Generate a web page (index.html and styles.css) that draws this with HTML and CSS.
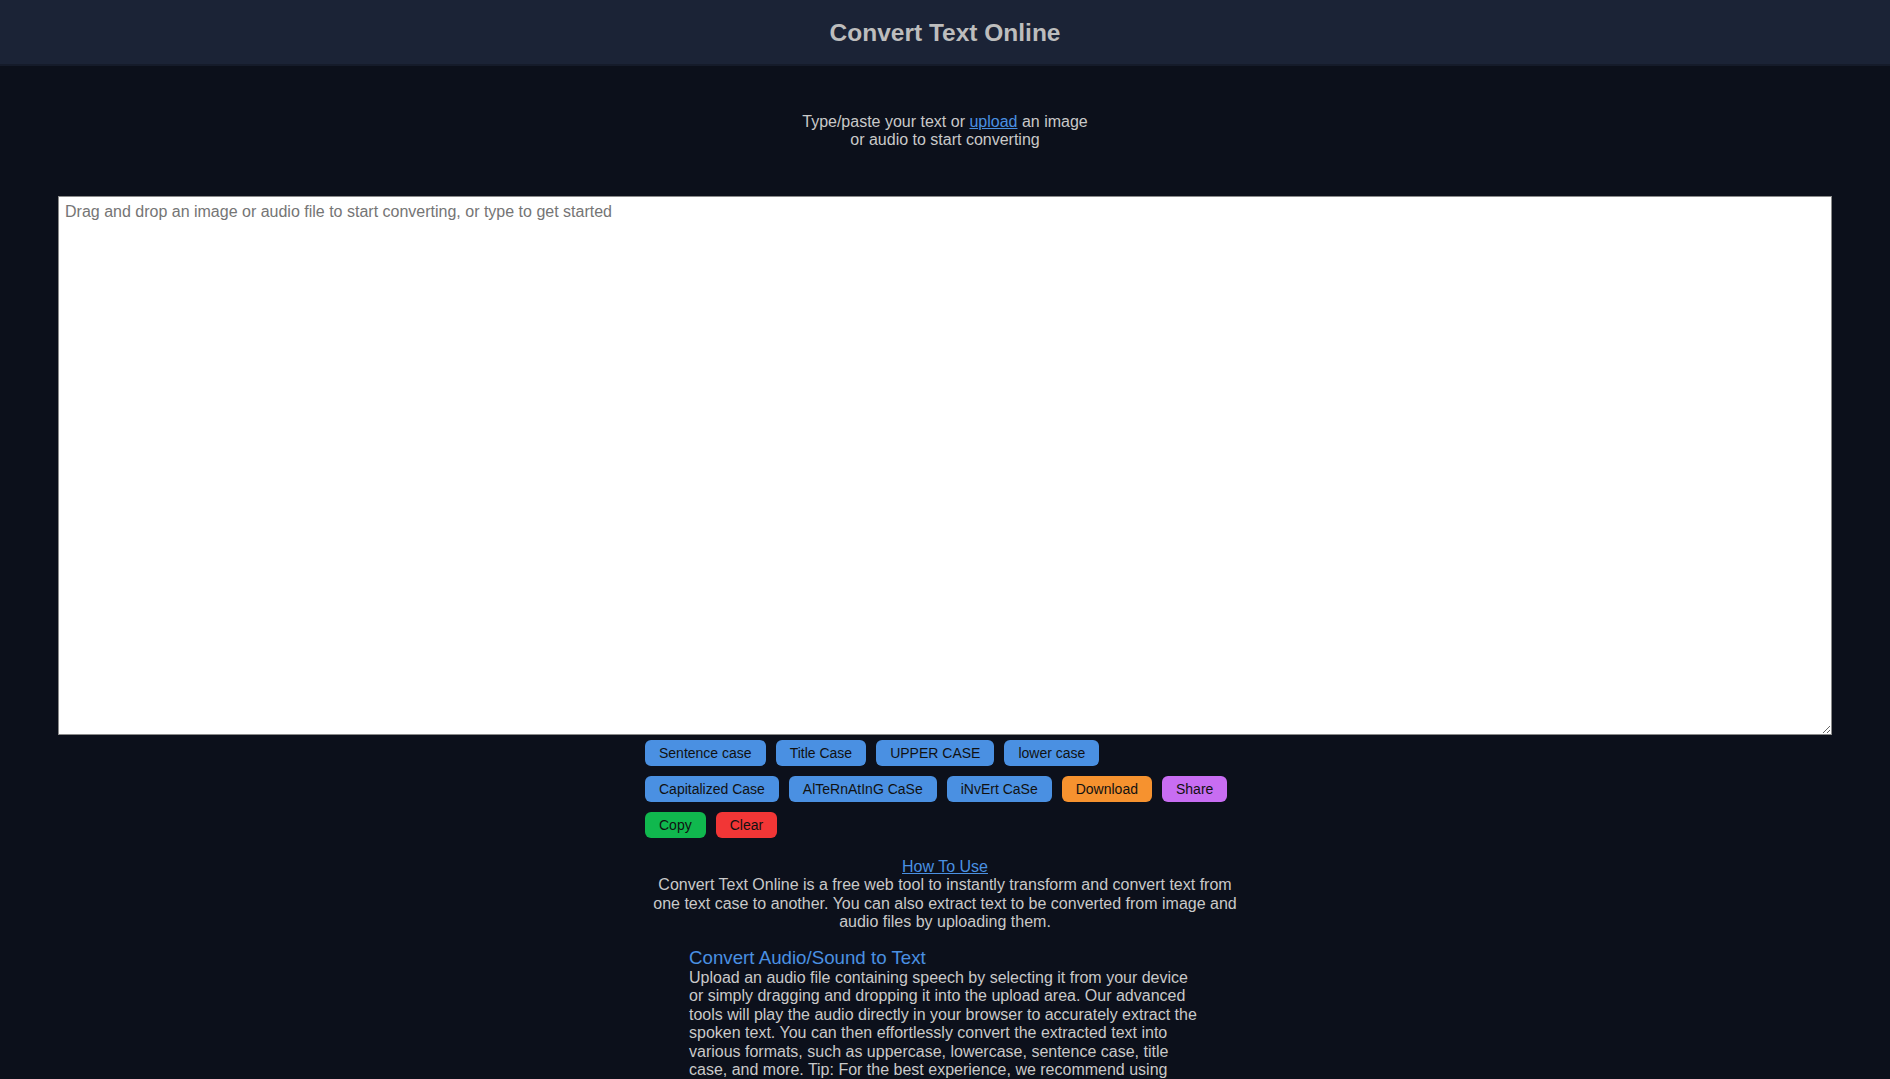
FILE: index.html
```html
<!DOCTYPE html>
<html lang="en">
<head>
<meta charset="utf-8">
<title>Convert Text Online</title>
<link rel="stylesheet" href="styles.css">
</head>
<body>
<header class="topbar">
  <h1 class="brand">Convert Text Online</h1>
</header>
<main class="main">
  <p class="intro">Type/paste your text or <a href="#" class="link">upload</a> an image or audio to start converting</p>
  <textarea class="editor" placeholder="Drag and drop an image or audio file to start converting, or type to get started"></textarea>
  <div class="actions">
    <div class="row">
      <button class="btn blue">Sentence case</button>
      <button class="btn blue">Title Case</button>
      <button class="btn blue">UPPER CASE</button>
      <button class="btn blue">lower case</button>
    </div>
    <div class="row">
      <button class="btn blue">Capitalized Case</button>
      <button class="btn blue">AlTeRnAtInG CaSe</button>
      <button class="btn blue">iNvErt CaSe</button>
      <button class="btn orange">Download</button>
      <button class="btn purple">Share</button>
    </div>
    <div class="row">
      <button class="btn green">Copy</button>
      <button class="btn red">Clear</button>
    </div>
  </div>
  <section class="howto">
    <a href="#" class="link">How To Use</a>
    <p class="howto-text">Convert Text Online is a free web tool to instantly transform and convert text from one text case to another. You can also extract text to be converted from image and audio files by uploading them.</p>
    <div class="feature">
      <h3 class="feature-title">Convert Audio/Sound to Text</h3>
      <p class="feature-text">Upload an audio file containing speech by selecting it from your device or simply dragging and dropping it into the upload area. Our advanced tools will play the audio directly in your browser to accurately extract the spoken text. You can then effortlessly convert the extracted text into various formats, such as uppercase, lowercase, sentence case, title case, and more. Tip: For the best experience, we recommend using clear recordings with minimal background noise.</p>
    </div>
  </section>
</main>
</body>
</html>
```

FILE: styles.css
```css
* { box-sizing: border-box; }

html, body {
  margin: 0;
  padding: 0;
  background: #0c101b;
  color: #c9c9c9;
  font-family: "Liberation Sans", Arial, sans-serif;
  font-size: 16px;
}

.topbar {
  height: 66px;
  background: #1b2336;
  border-bottom: 2px solid #151b2a;
  display: flex;
  align-items: center;
  justify-content: center;
}

.brand {
  margin: 0;
  font-size: 24.5px;
  font-weight: bold;
  color: #bdbdbd;
  line-height: 28px;
  padding-top: 2px;
}

.main {
  display: flex;
  flex-direction: column;
  align-items: center;
}

.intro {
  width: 300px;
  text-align: center;
  margin: 47px 0 46px;
  line-height: 18.4px;
  color: #c9c9c9;
}

.link {
  color: #4a90e2;
  text-decoration: underline;
}

.editor {
  display: block;
  width: calc(100% - 116px);
  height: 539px;
  margin: 0;
  padding: 6px;
  border: 1px solid #8a8a8a;
  background: #fff;
  color: #222;
  font-family: "Liberation Sans", Arial, sans-serif;
  font-size: 16px;
  resize: both;
}

.editor::placeholder {
  color: #757575;
}

.actions {
  width: 600px;
  margin-top: 5px;
  display: flex;
  flex-direction: column;
  gap: 10px;
}

.row {
  display: flex;
  gap: 10px;
}

.btn {
  height: 26px;
  padding: 0 14px;
  border: none;
  border-radius: 6px;
  font-family: "Liberation Sans", Arial, sans-serif;
  font-size: 14px;
  color: #111;
  cursor: pointer;
}

.blue { background: #4a90e2; }
.orange { background: #f6922f; }
.purple { background: #c86df2; }
.green { background: #10b84e; }
.red { background: #f23636; }

.howto {
  width: 600px;
  margin-top: 20px;
  text-align: center;
  line-height: 18.4px;
}

.howto-text {
  margin: 0;
}

.feature {
  text-align: left;
  padding: 0 44px;
  margin-top: 16px;
}

.feature-title {
  margin: 0;
  font-size: 18.72px;
  font-weight: normal;
  color: #4a90e2;
  line-height: 21.5px;
}

.feature-text {
  margin: 0;
}
```
